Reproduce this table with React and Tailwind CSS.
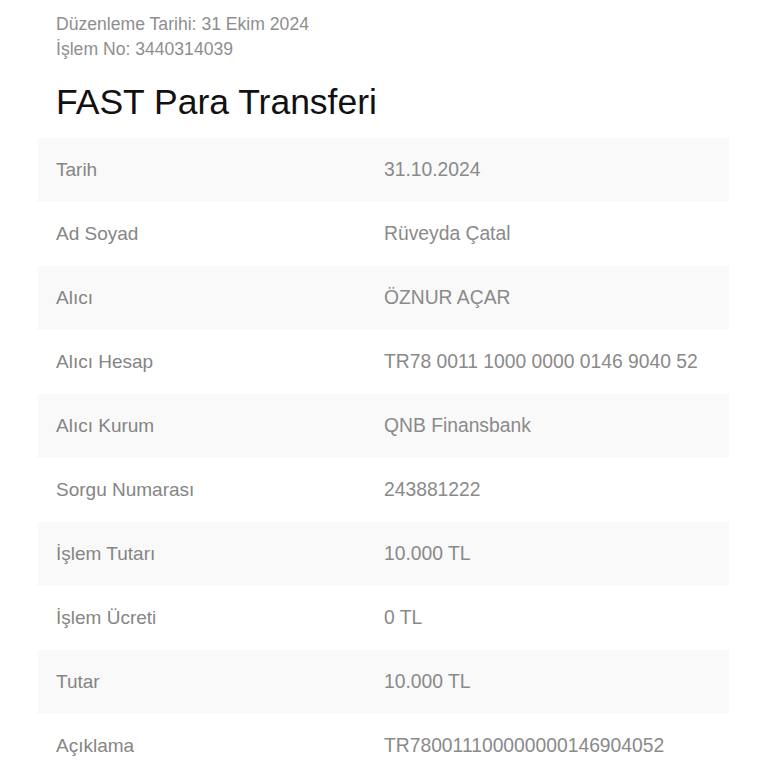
const rows = [
  ['Tarih', '31.10.2024'],
  ['Ad Soyad', 'Rüveyda Çatal'],
  ['Alıcı', 'ÖZNUR AÇAR'],
  ['Alıcı Hesap', 'TR78 0011 1000 0000 0146 9040 52'],
  ['Alıcı Kurum', 'QNB Finansbank'],
  ['Sorgu Numarası', '243881222'],
  ['İşlem Tutarı', '10.000 TL'],
  ['İşlem Ücreti', '0 TL'],
  ['Tutar', '10.000 TL'],
  ['Açıklama', 'TR780011100000000146904052'],
]

export default function App() {
  return (
    <div className="min-h-screen bg-white font-['Liberation_Sans',Arial,sans-serif]">
      <div className="px-[56px] pt-[12px]">
        <p className="text-[17.6px] leading-[25px] text-[#8e8e8e]">Düzenleme Tarihi: 31 Ekim 2024</p>
        <p className="text-[17.6px] leading-[25px] text-[#8e8e8e]">İşlem No: 3440314039</p>
        <h1 className="mt-[20px] text-[35.5px] leading-[40px] text-[#111]">FAST Para Transferi</h1>
      </div>

      <div className="mx-[38px] mt-[16px] w-[691px]">
        {rows.map(([label, value], i) => (
          <div
            key={label}
            className={`flex h-[64px] items-center px-[18px] text-[19px] ${i % 2 === 0 ? 'bg-[#f9f9f9]' : 'bg-white'}`}
          >
            <span className="w-[328px] text-[#858585]">{label}</span>
            <span className="text-[19.3px] text-[#8a8a8a]">{value}</span>
          </div>
        ))}
      </div>
    </div>
  )
}
